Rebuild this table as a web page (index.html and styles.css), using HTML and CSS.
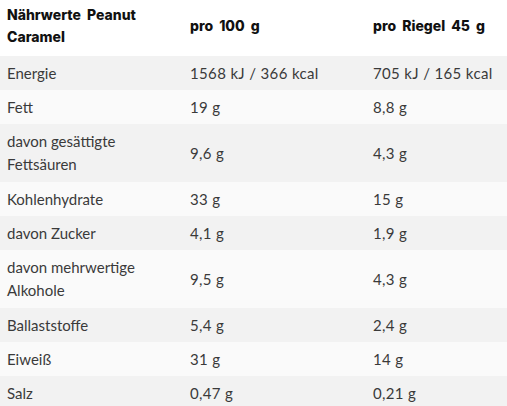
FILE: index.html
```html
<!DOCTYPE html>
<html lang="de">
<head>
<meta charset="utf-8">
<link rel="stylesheet" href="styles.css">
</head>
<body>
<table class="nutri">
  <thead>
    <tr>
      <th>Nährwerte Peanut<br>Caramel</th>
      <th>pro 100 g</th>
      <th>pro Riegel 45 g</th>
    </tr>
  </thead>
  <tbody>
    <tr><td>Energie</td><td>1568 kJ / 366 kcal</td><td>705 kJ / 165 kcal</td></tr>
    <tr><td>Fett</td><td>19 g</td><td>8,8 g</td></tr>
    <tr><td class="two">davon gesättigte<br>Fettsäuren</td><td>9,6 g</td><td>4,3 g</td></tr>
    <tr><td>Kohlenhydrate</td><td>33 g</td><td>15 g</td></tr>
    <tr><td>davon Zucker</td><td>4,1 g</td><td>1,9 g</td></tr>
    <tr><td class="two">davon mehrwertige<br>Alkohole</td><td>9,5 g</td><td>4,3 g</td></tr>
    <tr><td>Ballaststoffe</td><td>5,4 g</td><td>2,4 g</td></tr>
    <tr><td>Eiweiß</td><td>31 g</td><td>14 g</td></tr>
    <tr><td>Salz</td><td>0,47 g</td><td>0,21 g</td></tr>
  </tbody>
</table>
</body>
</html>
```
FILE: styles.css
```css
html, body {
  margin: 0;
  padding: 0;
  background: #ffffff;
  overflow: hidden;
}
.nutri {
  border-collapse: collapse;
  table-layout: fixed;
  width: 549px;
  font-family: "Lato", "Liberation Sans", sans-serif;
  color: #3a3a3a;
}
.nutri th, .nutri td {
  width: 169px;
  padding: 6px 7px;
  text-align: left;
  vertical-align: middle;
  line-height: 22px;
}
.nutri th {
  font-family: "Inter", "Liberation Sans", sans-serif;
  font-weight: 800;
  font-size: 14px;
  word-spacing: 3px;
  color: #111111;
  background: #ffffff;
  padding: 4px 7px 8px;
}
.nutri td {
  font-size: 15px;
  font-weight: 400;
}
.nutri td.two {
  line-height: 23px;
}
.nutri td + td {
  letter-spacing: 0.35px;
}
.nutri tbody tr:nth-child(odd) td {
  background: #f2f2f2;
}
.nutri tbody tr:nth-child(even) td {
  background: #fafafa;
}
```
